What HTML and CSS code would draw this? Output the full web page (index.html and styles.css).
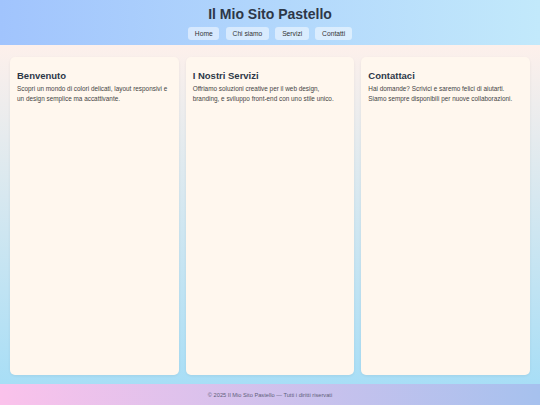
FILE: index.html
```html
<!doctype html>
<html lang="it">
<head>
    <meta charset="UTF-8"/>
    <meta name="viewport" content="width=device-width, initial-scale=1.0"/>
    <title>Il Mio Sito Pastello</title>
    <link rel="stylesheet" href="styles.css">
</head>
<body>
<header class="site-header">
    <h1>Il Mio Sito Pastello</h1>
    <nav class="nav">
        <a href="#">Home</a>
        <a href="#">Chi siamo</a>
        <a href="#">Servizi</a>
        <a href="#">Contatti</a>
    </nav>
</header>

<main class="content">
    <section class="card">
        <h2>Benvenuto</h2>
        <p>Scopri un mondo di colori delicati, layout responsivi e un design semplice ma accattivante.</p>
    </section>
    <section class="card">
        <h2>I Nostri Servizi</h2>
        <p>Offriamo soluzioni creative per il web design, branding, e sviluppo front-end con uno stile unico.</p>
    </section>
    <section class="card">
        <h2>Contattaci</h2>
        <p>Hai domande? Scrivici e saremo felici di aiutarti. Siamo sempre disponibili per nuove collaborazioni.</p>
    </section>
</main>

<footer class="site-footer">
    &copy; 2025 Il Mio Sito Pastello &mdash; Tutti i diritti riservati
</footer>
</body>
</html>
```

FILE: styles.css
```css
body {
    font-family: "Liberation Sans", Arial, sans-serif;
    color: #444;
    margin: 0;
    min-height: 100vh;
    display: flex;
    flex-direction: column;
}

.site-header {
    background: linear-gradient(to right, #a1c4fd, #c2e9fb);
    text-align: center;
    padding: 6px 0 5px;
    box-shadow: 0 1px 3px rgba(0, 0, 0, 0.06);
}

.site-header h1 {
    margin: 0;
    font-size: 14px;
    line-height: 16px;
    color: #2d3748;
}

.nav {
    display: flex;
    justify-content: center;
    gap: 6.5px;
    margin-top: 5px;
}

.nav a {
    background: rgba(255, 255, 255, 0.5);
    color: #333;
    text-decoration: none;
    font-size: 6.7px;
    line-height: 7px;
    padding: 3px 6.7px;
    border-radius: 3px;
}

.content {
    flex: 1;
    display: grid;
    grid-template-columns: repeat(3, 1fr);
    gap: 7px;
    padding: 12px 10px 9px;
    background: linear-gradient(to bottom, #fdf0eb, #a8def6);
}

.card {
    background: #fff7ee;
    border-radius: 5px;
    padding: 13px 7px;
    box-shadow: 0 1px 3px rgba(0, 0, 0, 0.06);
}

.card h2 {
    margin: 0 0 3px;
    font-size: 9.5px;
    line-height: 11px;
    color: #2d3748;
}

.card p {
    margin: 0;
    font-size: 6.4px;
    line-height: 1.6;
    color: #444;
}

.site-footer {
    height: 21px;
    display: flex;
    align-items: center;
    justify-content: center;
    font-size: 5.7px;
    color: #5f5f7a;
    background: linear-gradient(to right, #fbc2eb, #a6c1ee);
}
```
